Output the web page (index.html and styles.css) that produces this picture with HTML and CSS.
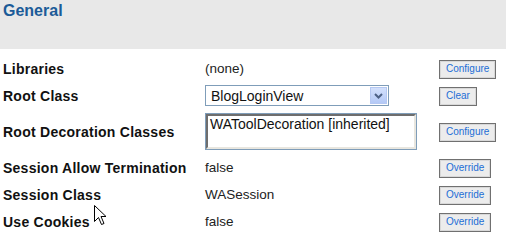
FILE: index.html
```html
<!DOCTYPE html>
<html lang="en">
<head>
  <meta charset="UTF-8">
  <title>General</title>
  <link rel="stylesheet" href="styles.css">
</head>
<body>
  <div class="header">
    <h1>General</h1>
  </div>

  <div class="settings">
    <div class="row">
      <div class="label">Libraries</div>
      <div class="value">(none)</div>
      <div class="action"><button class="btn">Configure</button></div>
    </div>
    <div class="row">
      <div class="label">Root Class</div>
      <div class="value">
        <div class="select">
          <span>BlogLoginView</span>
          <span class="select-arrow">
            <svg width="9" height="6" viewBox="0 0 9 6"><path d="M1 1 L4.5 4.5 L8 1" fill="none" stroke="#4d6185" stroke-width="2"/></svg>
          </span>
        </div>
      </div>
      <div class="action"><button class="btn">Clear</button></div>
    </div>
    <div class="row tall">
      <div class="label">Root Decoration Classes</div>
      <div class="value">
        <div class="textarea"><div class="textarea-inner">WAToolDecoration [inherited]</div></div>
      </div>
      <div class="action"><button class="btn">Configure</button></div>
    </div>
    <div class="row">
      <div class="label">Session Allow Termination</div>
      <div class="value">false</div>
      <div class="action"><button class="btn">Override</button></div>
    </div>
    <div class="row">
      <div class="label">Session Class</div>
      <div class="value">WASession</div>
      <div class="action"><button class="btn">Override</button></div>
    </div>
    <div class="row">
      <div class="label">Use Cookies</div>
      <div class="value">false</div>
      <div class="action"><button class="btn">Override</button></div>
    </div>
  </div>

  <!-- mouse pointer -->
  <svg class="cursor" width="13" height="21" viewBox="0 0 13 21">
    <path d="M0.5 0.5 L0.5 16.5 L4.5 12.5 L7.5 19.5 L10 18.5 L7 11.5 L12 11.5 Z" fill="#fff" stroke="#000" stroke-width="1"/>
  </svg>
</body>
</html>
```

FILE: styles.css
```css
body {
  margin: 0;
  background: #fff;
  font-family: "Liberation Sans", Arial, sans-serif;
  color: #000;
  position: relative;
}
.header {
  height: 49px;
  background: #e8e8e8;
  padding-left: 3px;
}
.header h1 {
  margin: 0;
  padding-top: 2px;
  font-size: 16px;
  font-weight: bold;
  color: #1b5b98;
}
.settings {
  margin-top: 6px;
}
.row {
  display: flex;
  align-items: center;
  height: 27px;
}
.row.tall {
  height: 45px;
}
.label {
  width: 202px;
  padding-left: 3px;
  font-size: 14px;
  font-weight: bold;
  letter-spacing: 0.25px;
  color: #111;
}
.value {
  width: 234px;
  font-size: 13.5px;
  color: #222;
}
.action {
  flex: 1;
}
.btn {
  height: 19px;
  padding: 0 6px;
  border: 1px solid #707070;
  box-shadow: inset 0 0 0 1px #d8d8d8;
  background: #ececec;
  color: #1c6ed6;
  font-family: "Liberation Sans", Arial, sans-serif;
  font-size: 10px;
  line-height: 16px;
  cursor: pointer;
}
.select {
  height: 19px;
  border: 1px solid #7f9db9;
  display: flex;
  align-items: center;
  justify-content: space-between;
  padding-left: 5px;
  width: 177px;
  font-size: 14px;
  color: #111;
}
.select-arrow {
  width: 15px;
  height: 15px;
  margin-right: 1px;
  border: 1px solid #b5c8f2;
  background: linear-gradient(#d3e0fc, #b4c9f6);
  display: flex;
  align-items: center;
  justify-content: center;
}
.textarea {
  width: 210px;
  height: 35px;
  border: 1px solid #7f9db9;
}
.textarea-inner {
  height: 31px;
  border: 2px solid;
  border-color: #6e6e6e #e8e6df #e8e6df #6e6e6e;
  padding: 0 2px;
  font-size: 14px;
  line-height: 16px;
  color: #111;
}
.cursor {
  position: absolute;
  left: 94px;
  top: 205px;
}
```
